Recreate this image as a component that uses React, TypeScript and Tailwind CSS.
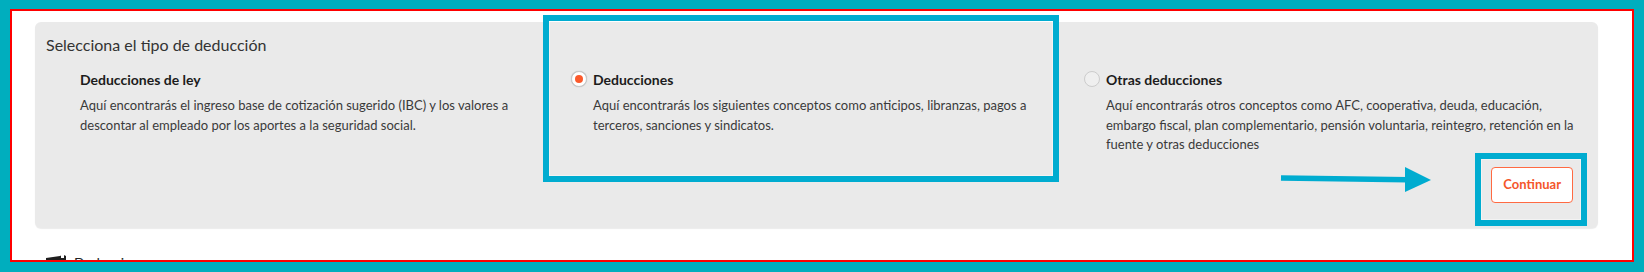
import { ReactNode } from "react";

interface OptionProps {
  title: string;
  children: ReactNode;
  state: "none" | "on" | "off";
  textWidth: string;
}

function Radio({ state }: { state: "none" | "on" | "off" }) {
  if (state === "none") {
    return <div className="w-4 h-4 shrink-0" />;
  }
  if (state === "on") {
    return (
      <div className="mt-[1px] w-4 h-4 shrink-0 rounded-full bg-white border border-[#c9c9c9] shadow-[0_0_1px_rgba(0,0,0,0.25)] flex items-center justify-center">
        <div className="w-2 h-2 rounded-full bg-[#fb5a2c]" />
      </div>
    );
  }
  return (
    <div className="mt-[1px] w-4 h-4 shrink-0 rounded-full bg-[#efefef] border border-[#cccccc]" />
  );
}

function Option({ title, children, state, textWidth }: OptionProps) {
  return (
    <div className="flex items-start gap-[6px]">
      <Radio state={state} />
      <div className={textWidth}>
        <div className="text-[14px] leading-5 font-bold text-[#1c1c1c]">{title}</div>
        <p className="mt-[6px] text-[13px] leading-[19.5px] text-[#3a3a3a]">{children}</p>
      </div>
    </div>
  );
}

export default function App() {
  return (
    <div className="relative w-[1644px] h-[272px] bg-[#00aebe] pt-[9px] px-[10px] pb-[10px] font-['Lato','Open_Sans',sans-serif]">
      <div className="h-full border-2 border-[#ff0000] bg-white overflow-hidden pl-[23px] pr-[34px] pt-[11px]">
        {/* Card */}
        <div className="h-[206px] rounded-md bg-[#eaeaea] shadow-[0_1px_1px_rgba(0,0,0,0.08)] pl-[11px] pr-[25px] pt-[11px] pb-[25px] flex flex-col">
          <h2 className="text-[16px] leading-6 text-[#333333]">Selecciona el tipo de deducción</h2>

          <div className="mt-[13px] ml-[12px] grid grid-cols-[513px_513px_1fr]">
            <Option title="Deducciones de ley" state="none" textWidth="w-[480px]">
              Aquí encontrarás el ingreso base de cotización sugerido (IBC) y los valores a descontar al
              empleado por los aportes a la seguridad social.
            </Option>
            <Option title="Deducciones" state="on" textWidth="w-[470px]">
              Aquí encontrarás los siguientes conceptos como anticipos, libranzas, pagos a terceros,
              sanciones y sindicatos.
            </Option>
            <Option title="Otras deducciones" state="off" textWidth="w-[488px]">
              Aquí encontrarás otros conceptos como AFC, cooperativa, deuda, educación, embargo fiscal, plan
              complementario, pensión voluntaria, reintegro, retención en la fuente y otras deducciones
            </Option>
          </div>

          <div className="mt-auto flex justify-end">
            <button className="h-[36px] px-[11px] rounded-[4px] border border-[#ff6a42] bg-white text-[13px] font-bold text-[#f4562b]">
              Continuar
            </button>
          </div>
        </div>

        {/* Next section, cut off by the frame */}
        <div className="mt-[24px] ml-[10px] flex items-start gap-[7px] text-[14px] text-[#222222]">
          <svg width="22" height="16" viewBox="0 0 22 16" className="mt-[1px]">
            <path d="M1 5 L15 3 Q18 1 21 3 L21 9 L1 11 Z" fill="#1e1e1e" />
            <rect x="16" y="2" width="3" height="3" fill="#ffffff" />
          </svg>
          <span>Deducciones</span>
        </div>
      </div>

      {/* Annotation overlays */}
      <div className="absolute left-[543px] top-[15px] w-[516px] h-[167px] border-[6px] border-[#00acd0] shadow-[inset_0_0_0_1px_rgba(255,255,255,0.45)]" />
      <div className="absolute left-[1475px] top-[153px] w-[112px] h-[73px] border-[6px] border-[#00acd0] shadow-[inset_0_0_0_1px_rgba(255,255,255,0.45)]" />
      <svg className="absolute left-[1278px] top-[164px]" width="156" height="32" viewBox="0 0 156 32">
        <line x1="3" y1="14" x2="130" y2="15.8" stroke="#00acd0" strokeWidth="5.4" />
        <polygon points="127,3 153,16 127,28" fill="#00acd0" />
      </svg>
    </div>
  );
}
